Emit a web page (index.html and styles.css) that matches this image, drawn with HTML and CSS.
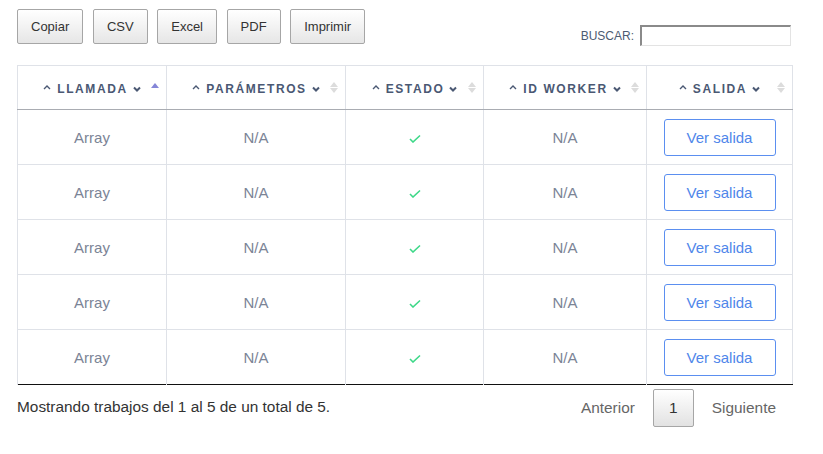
FILE: index.html
```html
<!DOCTYPE html>
<html lang="es">
<head>
<meta charset="utf-8">
<title>Trabajos</title>
<link rel="stylesheet" href="styles.css">
</head>
<body>
<div class="wrap">
  <div class="toolbar">
    <div class="btns">
      <button class="dt-btn">Copiar</button>
      <button class="dt-btn">CSV</button>
      <button class="dt-btn">Excel</button>
      <button class="dt-btn">PDF</button>
      <button class="dt-btn">Imprimir</button>
    </div>
    <label class="search">BUSCAR: <input type="text" class="search-input"></label>
  </div>

  <table class="grid">
    <colgroup>
      <col class="c1"><col class="c2"><col class="c3"><col class="c4"><col class="c5">
    </colgroup>
    <thead>
      <tr>
        <th class="asc"><span class="hd"><svg class="up" viewBox="0 0 8 5"><polyline points="1,4.5 4,1.5 7,4.5"/></svg>LLAMADA<svg class="down" viewBox="0 0 8 5"><polyline points="1,1 4,4 7,1"/></svg></span><span class="sort"><i class="tri-up"></i></span></th>
        <th><span class="hd"><svg class="up" viewBox="0 0 8 5"><polyline points="1,4.5 4,1.5 7,4.5"/></svg>PARÁMETROS<svg class="down" viewBox="0 0 8 5"><polyline points="1,1 4,4 7,1"/></svg></span><span class="sort"><i class="tri-up"></i><i class="tri-down"></i></span></th>
        <th><span class="hd"><svg class="up" viewBox="0 0 8 5"><polyline points="1,4.5 4,1.5 7,4.5"/></svg>ESTADO<svg class="down" viewBox="0 0 8 5"><polyline points="1,1 4,4 7,1"/></svg></span><span class="sort"><i class="tri-up"></i><i class="tri-down"></i></span></th>
        <th><span class="hd"><svg class="up" viewBox="0 0 8 5"><polyline points="1,4.5 4,1.5 7,4.5"/></svg>ID WORKER<svg class="down" viewBox="0 0 8 5"><polyline points="1,1 4,4 7,1"/></svg></span><span class="sort"><i class="tri-up"></i><i class="tri-down"></i></span></th>
        <th><span class="hd"><svg class="up" viewBox="0 0 8 5"><polyline points="1,4.5 4,1.5 7,4.5"/></svg>SALIDA<svg class="down" viewBox="0 0 8 5"><polyline points="1,1 4,4 7,1"/></svg></span><span class="sort"><i class="tri-up"></i><i class="tri-down"></i></span></th>
      </tr>
    </thead>
    <tbody>
      <tr><td>Array</td><td>N/A</td><td><svg class="check" viewBox="0 0 12 9"><polyline points="1,5 4,8 11,1.5"/></svg></td><td>N/A</td><td><button class="out-btn">Ver salida</button></td></tr>
      <tr><td>Array</td><td>N/A</td><td><svg class="check" viewBox="0 0 12 9"><polyline points="1,5 4,8 11,1.5"/></svg></td><td>N/A</td><td><button class="out-btn">Ver salida</button></td></tr>
      <tr><td>Array</td><td>N/A</td><td><svg class="check" viewBox="0 0 12 9"><polyline points="1,5 4,8 11,1.5"/></svg></td><td>N/A</td><td><button class="out-btn">Ver salida</button></td></tr>
      <tr><td>Array</td><td>N/A</td><td><svg class="check" viewBox="0 0 12 9"><polyline points="1,5 4,8 11,1.5"/></svg></td><td>N/A</td><td><button class="out-btn">Ver salida</button></td></tr>
      <tr><td>Array</td><td>N/A</td><td><svg class="check" viewBox="0 0 12 9"><polyline points="1,5 4,8 11,1.5"/></svg></td><td>N/A</td><td><button class="out-btn">Ver salida</button></td></tr>
    </tbody>
  </table>

  <div class="footer">
    <div class="info">Mostrando trabajos del 1 al 5 de un total de 5.</div>
    <div class="paging">
      <span class="pg-link">Anterior</span>
      <span class="pg-btn">1</span>
      <span class="pg-link">Siguiente</span>
    </div>
  </div>
</div>
</body>
</html>
```

FILE: styles.css
```css
* { box-sizing: border-box; }
html, body { margin: 0; padding: 0; background: #fff; }
body { font-family: "Liberation Sans", Arial, sans-serif; color: #333; }

.wrap { width: 774px; margin: 0 0 0 17px; padding-top: 9px; }

.toolbar { display: flex; justify-content: space-between; align-items: flex-end; }
.btns { display: flex; gap: 9.6px; }
.dt-btn {
  height: 35px;
  padding: 0 13px;
  border: 1px solid #a6a6a6;
  border-radius: 2px;
  background: linear-gradient(#ffffff, #e6e6e6);
  font-family: "Liberation Sans", Arial, sans-serif;
  font-size: 13px;
  color: #333;
}
.search {
  display: flex; align-items: center; gap: 6px;
  font-size: 12px; color: #4d5b72;
  margin-bottom: -2px;
}
.search-input {
  width: 151px; height: 21px;
  border: 1px solid #e3e3e3;
  border-top: 2px solid #8a8a8a;
  border-left: 2px solid #8a8a8a;
  padding: 0; margin: 0;
  background: #fff;
}

.grid {
  width: 775px;
  margin-top: 21px;
  border-collapse: collapse;
  border: 1px solid #dfe2e8;
  border-bottom: 1px solid #111;
  table-layout: fixed;
}
.c1 { width: 149px; } .c2 { width: 179px; } .c3 { width: 138px; } .c4 { width: 163px; } .c5 { width: 146px; }

.grid th {
  position: relative;
  height: 44px;
  padding: 0;
  border-left: 1px solid #dfe2e8;
  border-bottom: 1px solid #a9acb2;
  font-size: 12px;
  font-weight: bold;
  letter-spacing: 1.6px;
  color: #4a5873;
  text-align: center;
  vertical-align: middle;
}
.hd { display: inline-flex; align-items: center; gap: 6px; padding-bottom: 1px; }
.hd svg { width: 8px; height: 6px; fill: none; stroke: #4a5873; }
.hd .up { stroke-width: 1.4; margin-top: -4px; }
.hd .down { stroke-width: 2; margin-left: -1px; }

.sort {
  position: absolute; right: 7px; top: 16px;
  display: flex; flex-direction: column; gap: 1px;
}
.sort i { display: block; width: 0; height: 0; border-left: 4px solid transparent; border-right: 4px solid transparent; }
.tri-up { border-bottom: 5px solid #dcdcdc; }
.tri-down { border-top: 5px solid #dcdcdc; }
.asc .tri-up { border-bottom-color: #8586d8; }
.asc .sort { top: 17px; }

.grid td {
  height: 55px;
  padding: 0;
  border-left: 1px solid #dfe2e8;
  border-top: 1px solid #dfe2e8;
  text-align: center;
  vertical-align: middle;
  font-size: 15px;
  color: #7b8496;
}
.grid tbody tr:first-child td { border-top: none; }
.check { width: 12px; height: 9px; fill: none; stroke: #3dd888; stroke-width: 1.6; display: inline-block; vertical-align: middle; }

.out-btn {
  width: 112px; height: 37px;
  border: 1px solid #5b8ff0;
  border-radius: 3px;
  background: #fff;
  color: #4f86ea;
  font-family: "Liberation Sans", Arial, sans-serif;
  font-size: 15px;
  padding: 0;
}

.footer { display: flex; justify-content: space-between; align-items: center; margin-top: 4px; }
.info { font-size: 15.4px; color: #333; padding-bottom: 2px; }
.paging { display: flex; align-items: center; gap: 18px; padding-right: 15px; }
.pg-link { font-size: 15.4px; color: #666; }
.pg-btn {
  width: 41px; height: 38px;
  display: flex; align-items: center; justify-content: center;
  border: 1px solid #a6a6a6;
  border-radius: 2px;
  background: linear-gradient(#ffffff, #e2e2e2);
  font-size: 15.4px; color: #333;
}
```
